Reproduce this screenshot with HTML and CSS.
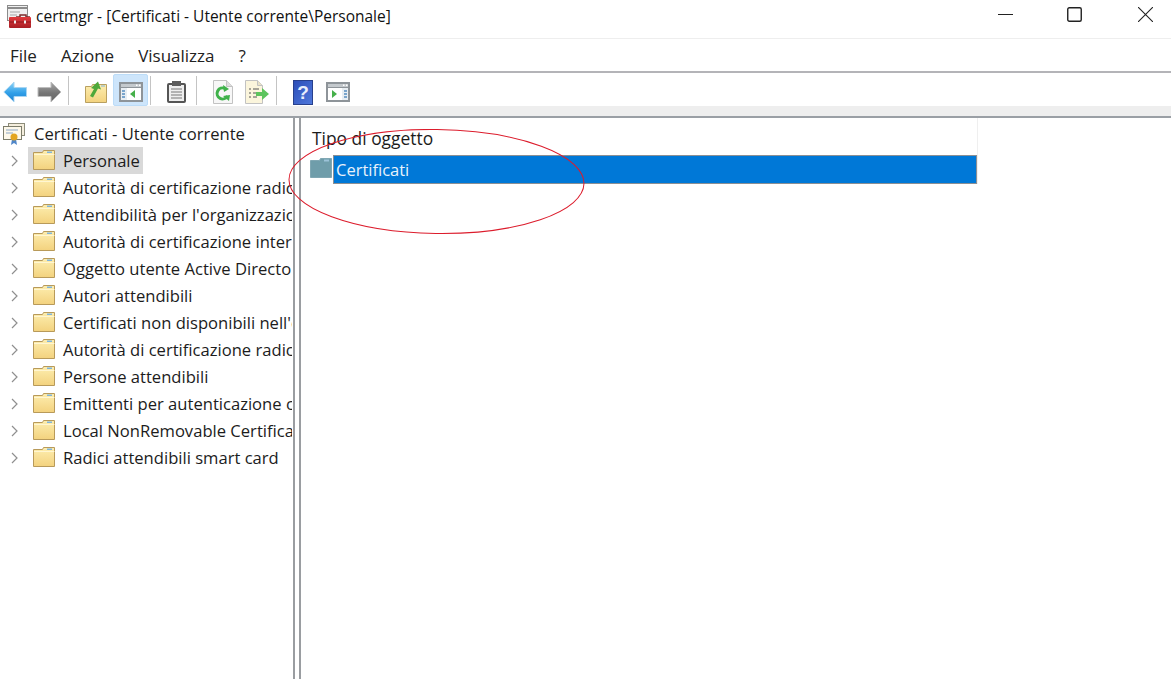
FILE: index.html
```html
<!DOCTYPE html>
<html lang="it">
<head>
<meta charset="utf-8">
<title>certmgr</title>
<link rel="stylesheet" href="styles.css">
</head>
<body>
<svg width="0" height="0" class="defs">
  <defs>
    <linearGradient id="fold" x1="0" y1="0" x2="0" y2="1"><stop offset="0" stop-color="#fdeeb0"/><stop offset="1" stop-color="#f3d27e"/></linearGradient>
    <linearGradient id="blue" x1="0" y1="0" x2="0" y2="1"><stop offset="0" stop-color="#8fd4f7"/><stop offset=".55" stop-color="#2f9fe8"/><stop offset="1" stop-color="#1f7fce"/></linearGradient>
    <linearGradient id="gray" x1="0" y1="0" x2="0" y2="1"><stop offset="0" stop-color="#a9a9a9"/><stop offset=".55" stop-color="#757575"/><stop offset="1" stop-color="#666"/></linearGradient>
    <linearGradient id="hlp" x1="0" y1="0" x2="1" y2="1"><stop offset="0" stop-color="#2c4eb8"/><stop offset="1" stop-color="#4f78dc"/></linearGradient>
    <linearGradient id="tbox" x1="0" y1="0" x2="0" y2="1"><stop offset="0" stop-color="#e0393c"/><stop offset="1" stop-color="#a81e24"/></linearGradient>
    <symbol id="folder" viewBox="0 0 22 22">
      <path d="M.5 20.500V3.500h9l1-2h11v19z" fill="url(#fold)" stroke="#b89a5a"/>
      <path d="M1 5.500h20.500" stroke="#fff6d2"/>
      <path d="M14 2.500h5v1.500h-5z" fill="#7fb4dc"/>
    </symbol>
    <symbol id="pane" viewBox="0 0 24 20">
      <rect x="1" y="1" width="22" height="18" fill="#fff" stroke="#8e9499" stroke-width="2"/>
      <path d="M2 2h20v3H2z" fill="#c4c9cd"/>
      <path d="M2 5.500h20" stroke="#8e9499"/>
      <path d="M17 2.500h1.500v1.500H17zM20 2.500h1.500v1.500H20z" fill="#fff"/>
    </symbol>
  </defs>
</svg>
<div class="app">
  <header class="titlebar">
    <svg class="appicon" width="25" height="24" viewBox="0 0 25 24">
      <rect x=".5" y=".5" width="20" height="15" fill="#f0f0f0" stroke="#8b8b8b"/>
      <path d="M1 3h19" stroke="#8b8b8b" stroke-width="2"/>
      <path d="M3 7h10M3 10h7" stroke="#a5a5a5"/>
      <path d="M9 12h4v-2h6v2h4" fill="none" stroke="#7c2b2b" stroke-width="1.500"/>
      <rect x="2" y="12" width="22" height="11" rx="1" fill="url(#tbox)"/>
      <path d="M2 17h22" stroke="#8d1a1f"/>
      <rect x="7" y="15.500" width="2" height="3" fill="#eee"/><rect x="17" y="15.500" width="2" height="3" fill="#eee"/>
    </svg>
    <span class="wintitle">certmgr - [Certificati - Utente corrente\Personale]</span>
    <div class="winbtns">
      <svg width="15" height="15" viewBox="0 0 15 15"><path d="M0 7.500h15" stroke="#222"/></svg>
      <svg width="15" height="15" viewBox="0 0 15 15"><rect x=".75" y=".75" width="13.500" height="13.500" rx="1.500" fill="none" stroke="#222" stroke-width="1.400"/></svg>
      <svg width="15" height="15" viewBox="0 0 15 15"><path d="M0 0l15 15M15 0L0 15" stroke="#222" stroke-width="1.100"/></svg>
    </div>
  </header>
  <nav class="menubar">
    <span>File</span><span>Azione</span><span>Visualizza</span><span>?</span>
  </nav>
  <div class="toolbar">
    <button class="tool t-back"><svg width="24" height="22" viewBox="0 0 24 22"><path d="M.8 11L11 1v5.500h12.500v9H11V21z" fill="url(#blue)" stroke="#a8d5f2"/></svg></button>
    <button class="tool t-fwd"><svg width="25" height="22" viewBox="0 0 25 22"><path d="M24 11L14 1v5.500H1v9h13V21z" fill="url(#gray)" stroke="#bdbdbd"/></svg></button>
    <i class="sep s1"></i>
    <button class="tool t-up"><svg width="22" height="22" viewBox="0 0 22 22"><path d="M.5 21.500V5.500h6l1-2h14v18z" fill="url(#fold)" stroke="#b9a060"/><path d="M5 15l4-7-3-1 7-6.500 3 8-3-1-5 9z" fill="#4fa83a"/><path d="M16 4.500h4v1h-4z" fill="#7fb4dc"/></svg></button>
    <button class="tool t-pane active"><svg width="24" height="20" viewBox="0 0 24 20"><use href="#pane"/><path d="M2 6h6v12H2z" fill="#e8eef3"/><path d="M3 8h3v2H3zM3 11h3v2H3zM3 14h3v2H3z" fill="#7aa5cc"/><path d="M16 8v8l-5-4z" fill="#45b04a"/></svg></button>
    <i class="sep s2"></i>
    <button class="tool t-clip"><svg width="19" height="22" viewBox="0 0 19 22"><rect x="1" y="3" width="17" height="18" rx="1" fill="#eee" stroke="#555" stroke-width="2"/><rect x="5" y="0" width="9" height="5" fill="#5c5c5c"/><path d="M4 8h11M4 11h11M4 14h11M4 17h11" stroke="#777"/></svg></button>
    <i class="sep s3"></i>
    <button class="tool t-ref"><svg width="20" height="24" viewBox="0 0 20 24"><path d="M.5.500h13l6 6v17H.5z" fill="#f7f7f7" stroke="#c2c2c2"/><path d="M13.500.500v6h6" fill="#ddd" stroke="#c2c2c2"/><path d="M14.500 16a5.500 5.500 0 1 1-2.500-7.500" fill="none" stroke="#3fb24a" stroke-width="3"/><path d="M10 5l6 4-5 3z" fill="#3fb24a"/><path d="M10 16l6 5 1-6z" fill="#3fb24a"/></svg></button>
    <button class="tool t-exp"><svg width="24" height="24" viewBox="0 0 24 24"><path d="M.5.500h12l5 5v18H.5z" fill="#fbf5dc" stroke="#c2c2c2"/><path d="M12.500.500v5h5" fill="#e8e2c8" stroke="#c2c2c2"/><path d="M4 9h2M8 9h6M4 13h2M8 13h4M4 17h2M8 17h4" stroke="#555"/><path d="M11 12h6V8l7 6-7 6v-4h-6z" fill="#5dc45d"/></svg></button>
    <i class="sep s4"></i>
    <button class="tool t-help"><svg width="20" height="25" viewBox="0 0 20 25"><rect x=".5" y=".5" width="19" height="24" fill="url(#hlp)" stroke="#28408c"/><text x="10" y="19" class="helpq">?</text></svg></button>
    <button class="tool t-pane2"><svg width="24" height="20" viewBox="0 0 24 20"><use href="#pane"/><path d="M16 6h6v12h-6z" fill="#e8eef3"/><path d="M18 8h3v2h-3zM18 11h3v2h-3zM18 14h3v2h-3z" fill="#7aa5cc"/><path d="M6 8v8l5-4z" fill="#45b04a"/></svg></button>
  </div>
  <div class="band"></div>
  <main class="panes">
    <aside class="tree">
      <div class="root">
        <svg width="24" height="24" viewBox="0 0 24 24"><rect x="6.500" y="1.500" width="16" height="12" fill="#f5eedd" stroke="#8c8c7a"/><rect x="1.500" y="4.500" width="18" height="13" fill="#fdf8ea" stroke="#7c7c6a"/><path d="M4 8h12M4 11h7" stroke="#8aa5c5"/><path d="M10 17l-1 6 3-2 3 2-1-6z" fill="#4f86c9"/><circle cx="12" cy="15" r="3.500" fill="#e3a51f"/></svg>
        <span>Certificati - Utente corrente</span>
      </div>
      <ul class="rows">
        <li class="row"><svg class="chev" width="7" height="12" viewBox="0 0 7 12"><path d="M1 1l5 5-5 5" fill="none" stroke="#8f8f8f" stroke-width="1.200"/></svg><span class="item selected"><svg width="22" height="22"><use href="#folder"/></svg><span class="label">Personale</span></span></li>
        <li class="row"><svg class="chev" width="7" height="12" viewBox="0 0 7 12"><path d="M1 1l5 5-5 5" fill="none" stroke="#8f8f8f" stroke-width="1.200"/></svg><span class="item"><svg width="22" height="22"><use href="#folder"/></svg><span class="label">Autorità di certificazione radice attendibili</span></span></li>
        <li class="row"><svg class="chev" width="7" height="12" viewBox="0 0 7 12"><path d="M1 1l5 5-5 5" fill="none" stroke="#8f8f8f" stroke-width="1.200"/></svg><span class="item"><svg width="22" height="22"><use href="#folder"/></svg><span class="label">Attendibilità per l'organizzazione</span></span></li>
        <li class="row"><svg class="chev" width="7" height="12" viewBox="0 0 7 12"><path d="M1 1l5 5-5 5" fill="none" stroke="#8f8f8f" stroke-width="1.200"/></svg><span class="item"><svg width="22" height="22"><use href="#folder"/></svg><span class="label">Autorità di certificazione intermedie</span></span></li>
        <li class="row"><svg class="chev" width="7" height="12" viewBox="0 0 7 12"><path d="M1 1l5 5-5 5" fill="none" stroke="#8f8f8f" stroke-width="1.200"/></svg><span class="item"><svg width="22" height="22"><use href="#folder"/></svg><span class="label">Oggetto utente Active Directory</span></span></li>
        <li class="row"><svg class="chev" width="7" height="12" viewBox="0 0 7 12"><path d="M1 1l5 5-5 5" fill="none" stroke="#8f8f8f" stroke-width="1.200"/></svg><span class="item"><svg width="22" height="22"><use href="#folder"/></svg><span class="label">Autori attendibili</span></span></li>
        <li class="row"><svg class="chev" width="7" height="12" viewBox="0 0 7 12"><path d="M1 1l5 5-5 5" fill="none" stroke="#8f8f8f" stroke-width="1.200"/></svg><span class="item"><svg width="22" height="22"><use href="#folder"/></svg><span class="label">Certificati non disponibili nell'elenco</span></span></li>
        <li class="row"><svg class="chev" width="7" height="12" viewBox="0 0 7 12"><path d="M1 1l5 5-5 5" fill="none" stroke="#8f8f8f" stroke-width="1.200"/></svg><span class="item"><svg width="22" height="22"><use href="#folder"/></svg><span class="label">Autorità di certificazione radice di terze parti</span></span></li>
        <li class="row"><svg class="chev" width="7" height="12" viewBox="0 0 7 12"><path d="M1 1l5 5-5 5" fill="none" stroke="#8f8f8f" stroke-width="1.200"/></svg><span class="item"><svg width="22" height="22"><use href="#folder"/></svg><span class="label">Persone attendibili</span></span></li>
        <li class="row"><svg class="chev" width="7" height="12" viewBox="0 0 7 12"><path d="M1 1l5 5-5 5" fill="none" stroke="#8f8f8f" stroke-width="1.200"/></svg><span class="item"><svg width="22" height="22"><use href="#folder"/></svg><span class="label">Emittenti per autenticazione client</span></span></li>
        <li class="row"><svg class="chev" width="7" height="12" viewBox="0 0 7 12"><path d="M1 1l5 5-5 5" fill="none" stroke="#8f8f8f" stroke-width="1.200"/></svg><span class="item"><svg width="22" height="22"><use href="#folder"/></svg><span class="label">Local NonRemovable Certificates</span></span></li>
        <li class="row"><svg class="chev" width="7" height="12" viewBox="0 0 7 12"><path d="M1 1l5 5-5 5" fill="none" stroke="#8f8f8f" stroke-width="1.200"/></svg><span class="item"><svg width="22" height="22"><use href="#folder"/></svg><span class="label">Radici attendibili smart card</span></span></li>
      </ul>
    </aside>
    <section class="list">
      <div class="listcol">
        <div class="colhead">Tipo di oggetto</div>
        <div class="listrow">
          <svg width="22" height="20" viewBox="0 0 22 20"><path d="M.5 19.500V2.500h9l1-2h11v19z" fill="#6f9daa" stroke="#80a7b3"/><path d="M14 1.500h5v2h-5z" fill="#9cc3d8"/></svg>
          <span class="selrow">Certificati</span>
        </div>
      </div>
    </section>
  </main>
  <svg class="ring" width="300" height="110" viewBox="0 0 300 110"><ellipse cx="148.500" cy="52.500" rx="147.500" ry="52" transform="rotate(.8 148.500 52.500)" fill="none" stroke="#dc1c2c" stroke-width="1"/></svg>
</div>
</body>
</html>
```
FILE: styles.css
```css
* { box-sizing: border-box; }
html, body { margin: 0; padding: 0; height: 100%; overflow: hidden; background: #fff; }
body { font-family: "Open Sans", "Noto Sans", sans-serif; color: #1c1c1c; }
.defs { position: absolute; }
.app { position: relative; width: 1171px; height: 679px; display: flex; flex-direction: column; }

.titlebar { height: 39px; flex: none; display: flex; align-items: center; padding: 0 0 9px 7px; border-bottom: 1px solid #eeeeee; }
.appicon { flex: none; margin: 4px 4px 0 0; }
.wintitle { font-size: 15.500px; color: #111; white-space: nowrap; margin-top: 3px; }
.winbtns { margin-left: auto; display: flex; align-items: center; gap: 54px; padding-right: 18px; }
.winbtns svg:last-child { margin-left: 2px; }

.menubar { height: 34px; flex: none; display: flex; align-items: center; gap: 24px; padding: 0 0 0 10px; font-size: 17px; border-bottom: 2px solid #b4b4b8; color: #222; }

.toolbar { height: 33px; flex: none; display: flex; align-items: stretch; padding-left: 3px; background: #fff; }
.tool { border: 0; background: none; padding: 5px 0 0; display: flex; align-items: center; justify-content: center; flex: none; }
.sep { flex: none; width: 1px; height: 29px; align-self: center; background: #c4c4c4; margin-top: 2px; }
.t-back { width: 24px; }
.t-fwd { width: 25px; margin-left: 10px; }
.s1 { margin-left: 6px; }
.t-up { width: 22px; margin-left: 16px; }
.t-pane { width: 35px; margin-left: 6px; }
.t-pane.active { background: #cde5fb; border: 1px solid #bcdcf8; border-radius: 2px; margin-top: 1px; padding-top: 3px; }
.s2 { margin-left: 2px; }
.t-clip { width: 19px; margin-left: 16px; }
.s3 { margin-left: 10px; }
.t-ref { width: 20px; margin-left: 16px; }
.t-exp { width: 24px; margin-left: 12px; }
.s4 { margin-left: 7px; }
.t-help { width: 20px; margin-left: 16px; }
.t-pane2 { width: 24px; margin-left: 13px; }
.helpq { font-family: "Liberation Sans", sans-serif; font-size: 19px; font-weight: 700; fill: #e8eefc; text-anchor: middle; }

.band { height: 12px; flex: none; background: #eeeeee; border-bottom: 2px solid #9a9fa5; }

.panes { flex: 1; min-height: 0; display: flex; }
.tree { width: 295px; flex: none; border-right: 2px solid #9a9da1; overflow: hidden; padding-top: 2px; }
.root { height: 27px; display: flex; align-items: center; padding-left: 2px; gap: 8px; font-size: 16.600px; white-space: nowrap; }
.rows { list-style: none; margin: 0; padding: 0; width: 292px; overflow: hidden; }
.row { height: 27px; display: flex; align-items: center; padding-left: 11px; white-space: nowrap; }
.chev { flex: none; }
.item { display: inline-flex; align-items: center; height: 27px; margin-left: 10px; padding: 0 3px 0 5px; gap: 8px; font-size: 16.600px; }
.item svg { flex: none; margin-top: -2px; }
.item.selected { background: #d9d9d9; }

.list { flex: 1; margin-left: 4px; border-left: 2px solid #9a9da1; }
.listcol { width: 677px; border-right: 1px solid #efefef; }
.colhead { height: 37px; display: flex; align-items: center; padding: 3px 0 0 11px; font-size: 17.400px; }
.listrow { display: flex; align-items: center; padding-left: 9px; height: 29px; }
.listrow svg { flex: none; margin-right: 1px; margin-top: -4px; }
.selrow { flex: 1; height: 29px; background: #0078d7; border: 1px solid #8b8f94; color: #e8f2fb; display: flex; align-items: center; padding-left: 2px; font-size: 16.500px; }

.ring { position: absolute; left: 288px; top: 129px; pointer-events: none; }
```
